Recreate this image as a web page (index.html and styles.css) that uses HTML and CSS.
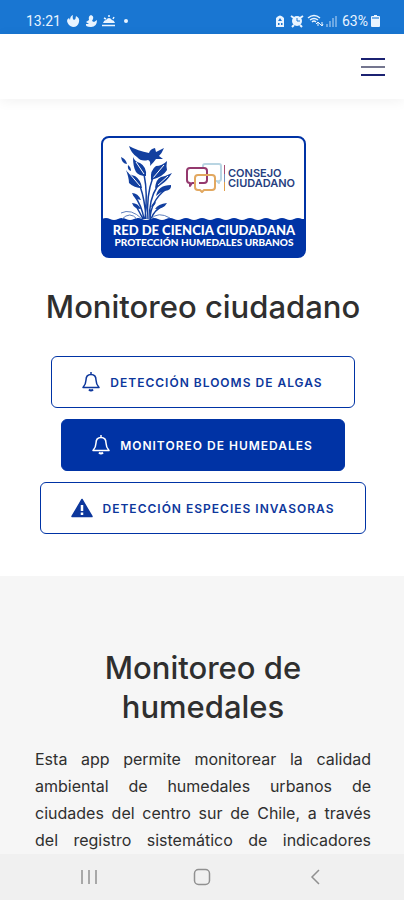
FILE: index.html
```html
<!DOCTYPE html>
<html lang="es">
<head>
<meta charset="utf-8">
<meta name="viewport" content="width=device-width, initial-scale=1">
<title>Monitoreo ciudadano</title>
<link rel="stylesheet" href="styles.css">
</head>
<body>
<div class="status">
  <div class="status-group">
    <span class="clock">13:21</span>
    <svg width="64" height="14" viewBox="0 0 64 14" fill="#e9f4ff" aria-hidden="true">
      <path d="M6 1 Q5 5 7 6 Q9 5 9 2 Q13 4 12 8 Q11 13 6 13 Q1 12 0 7 Q0 5 2 4 L3 6 Q3 2 6 1Z"/>
      <path d="M24 1 Q27 2 26 5 L25 7 L27 8 L30 6 Q30 13 24 13 Q18 13 19 10 L22 10 L19 8 L22 6 Q21 2 24 1Z"/>
      <path d="M36 9 Q37 6 39 6 Q42 2 45 6 Q47 6 48 9Z"/><path d="M35 11.500h13M37 4l2 1M42 1v2M47 3l-1 2" stroke="#e9f4ff" stroke-width="1.500"/>
      <circle cx="59" cy="7" r="2"/>
    </svg>
  </div>
  <div class="status-group status-right">
    <svg width="64" height="14" viewBox="0 0 64 14" fill="#e9f4ff" aria-hidden="true">
      <path d="M1 4 Q5 -1 9 4 V13 H1Z"/><path d="M5 4 L7 7 H3Z M3 9h1.500v2H3zM6 9h1.500v2H6z" fill="#1976d2"/>
      <circle cx="22" cy="7" r="5"/><path d="M16 2l3 2M28 2l-3 2M17 13l2-2M27 13l-2-2" stroke="#e9f4ff" stroke-width="2"/><path d="M22 4v3h3" stroke="#1976d2" fill="none"/>
      <path d="M33 4 Q39 -1 45 4 M35 6 Q39 3 43 6 M37 8 Q39 6 41 8" fill="none" stroke="#e9f4ff" stroke-width="1.500"/><path d="M43 12V8m-2 2l2-2 2 2M47 8v4m-2-2l2 2 1-2" fill="none" stroke="#e9f4ff"/>
      <path d="M51 10h2v3h-2zM54 7h2v6h-2zM57 4h2v9h-2zM60 2h2v11h-2z" opacity=".4"/>
    </svg>
    <span class="clock">63%</span>
    <svg width="9" height="14" viewBox="0 0 9 14" fill="#e9f4ff" aria-hidden="true"><path d="M3 1h3v1h2q1 0 1 1v9q0 1-1 1H1q-1 0-1-1V3q0-1 1-1h2z"/><path d="M1 3h7v2H1z" fill="#74afe8"/></svg>
  </div>
</div>
<header class="header">
  <button class="menu" aria-label="Abrir menú">
    <svg width="24" height="20" viewBox="0 0 24 20" aria-hidden="true"><path d="M0 2h24M0 18h24" stroke="#1b2272" stroke-width="2"/><path d="M0 10h24" stroke="#74768f" stroke-width="2"/></svg>
  </button>
</header>
<main class="main">
  <section class="hero">
    <svg class="logo" width="206" height="122" viewBox="0 0 206 122" role="img" aria-label="Red de Ciencia Ciudadana, Consejo Ciudadano">
      <rect x="2" y="1" width="203" height="120" rx="7" fill="#fff" stroke="#0033a5" stroke-width="2"/>
      <path fill="#0033a5" d="M2 83 q4-2 8 0 t8 0 8 0 8 0 8 0 8 0 8 0 8 0 8 0 8 0 8 0 8 0 8 0 8 0 8 0 8 0 8 0 8 0 8 0 8 0 8 0 8 0 8 0 8 0 8 0 h3 V114 q0 7-7 7 H9 q-7 0-7-7Z"/>
      <g fill="#123f9f">
        <path d="M29 10 Q38 15 49 17 Q50 13 55 12 L56 16 L64 12 Q62 17 59 20 L63 23 L56 23 Q54 26 50 30 Q51 25 48 24 Q41 26 37 21 Q31 17 29 10Z"/>
        <path d="M33 21 Q35 26 40 27 Q47 31 46 40 Q39 40 36 36 Q33 31 33 21Z"/>
        <path d="M67 25 Q66 30 67 34 Q63 41 51 44 Q50 34 56 30 Q62 30 67 25Z"/>
        <path d="M26 34 Q29 39 35 40 Q41 44 42 52 Q34 52 29 47 Q29 42 26 34Z"/>
        <path d="M72 37 Q67 45 62 48 Q59 51 55 52 Q56 43 61 41 Q66 40 72 37Z"/>
        <path d="M71 49 Q72 54 65 55 Q60 56 56 60 Q58 49 71 49Z"/>
        <path d="M21 21 Q26 23 27 28 Q22 28 21 21ZM28 29 Q31 31 31 35 Q27 34 28 29ZM32 57 Q38 57 41 64 Q34 63 32 57ZM32 67 Q38 67 41 73 Q34 73 32 67ZM67 67 Q64 73 55 73 Q58 68 67 67ZM56 66 Q55 70 51 71 Q52 67 56 66Z"/>
      </g>
      <path d="M36 26l8 12M64 29L53 42M29 37l11 13M68 40L57 50" stroke="#fff"/>
      <path d="M45 83 Q48 58 44 38 M46 83 Q45 64 40 50 M48 83 Q46 60 53 41 M50 83 Q48 65 58 49 M44 83 Q42 70 34 59 M50 83 Q51 65 65 54 M43 83 Q40 77 36 70 M51 83 Q54 74 64 69" fill="none" stroke="#123f9f" stroke-width="1.500"/>
      <path d="M22 83 Q30 75 37 83 M21 77 Q31 72 42 83 M51 83 Q58 75 70 82" fill="none" stroke="#5f80bd"/>
      <g fill="none" stroke-width="2" stroke-linejoin="round">
        <path d="M103 33 V30 q0-2 2-2 h14 q2 0 2 2 V43 q0 2-2 2 v2 l-2-2 h-2" stroke="#b9d5e2"/>
        <path d="M94 47 H92 l-2 3 v-3 q-3 0-3-3 V35 q0-3 3-3 h14 q3 0 3 3 V44 q0 3-3 3 h-5" stroke="#94396e"/>
        <path d="M102 39 h10 q3 0 3 3 v9 q0 3-3 3 h-8 l-2 2 -2-2 h-2 q-3 0-3-3 V42 q0-3 3-3 h4" stroke="#e2a860"/>
      </g>
      <path d="M124.500 29v9" stroke="#a84f76"/><path d="M124.500 38v8" stroke="#7793bd"/><path d="M124.500 46v9" stroke="#e2a04c"/>
      <text class="logo-council" x="128" y="41">CONSEJO</text>
      <text class="logo-council" x="128" y="51">CIUDADANO</text>
      <text class="logo-title" x="104" y="99">RED DE CIENCIA CIUDADANA</text>
      <text class="logo-subtitle" x="104" y="110">PROTECCIÓN HUMEDALES URBANOS</text>
    </svg>
    <h1 class="title">Monitoreo ciudadano</h1>
    <div class="actions">
      <button class="action">
        <svg class="icon" width="18" height="20" viewBox="0 0 18 20" fill="none" stroke="currentColor" stroke-width="1.500" aria-hidden="true"><path d="M9 0v2M1 15.500 Q4 12 4 8 Q4 2.500 9 2.500 Q14 2.500 14 8 Q14 12 17 15.500Z" stroke-linejoin="round"/><path d="M7 17.500q2 2 4 0" stroke-width="2"/></svg>
        DETECCIÓN BLOOMS DE ALGAS
      </button>
      <button class="action action-active">
        <svg class="icon" width="18" height="20" viewBox="0 0 18 20" fill="none" stroke="currentColor" stroke-width="1.500" aria-hidden="true"><path d="M9 0v2M1 15.500 Q4 12 4 8 Q4 2.500 9 2.500 Q14 2.500 14 8 Q14 12 17 15.500Z" stroke-linejoin="round"/><path d="M7 17.500q2 2 4 0" stroke-width="2"/></svg>
        MONITOREO DE HUMEDALES
      </button>
      <button class="action">
        <svg class="icon" width="22" height="20" viewBox="0 0 22 20" aria-hidden="true"><path d="M11 1.500 L21 18.500 H1Z" fill="currentColor" stroke="currentColor" stroke-width="1.500" stroke-linejoin="round"/><path d="M11 7v6M11 14.500v2.500" stroke="#fff" stroke-width="2.500"/></svg>
        DETECCIÓN ESPECIES INVASORAS
      </button>
    </div>
  </section>
  <section class="about">
    <h2 class="title">Monitoreo de humedales</h2>
    <p class="text">Esta app permite monitorear la calidad ambiental de humedales urbanos de ciudades del centro sur de Chile, a través del registro sistemático de indicadores</p>
  </section>
</main>
<nav class="system" aria-label="Navegación del sistema">
  <button class="key" aria-label="Recientes"><svg width="16" height="16" viewBox="0 0 16 16" fill="none" stroke="#909090" stroke-width="1.500"><path d="M1 1v14M8 1v14M15 1v14"/></svg></button>
  <button class="key" aria-label="Inicio"><svg width="18" height="18" viewBox="0 0 18 18" fill="none" stroke="#909090" stroke-width="1.500"><rect x="1.500" y="1.500" width="15" height="15" rx="4"/></svg></button>
  <button class="key" aria-label="Atrás"><svg width="16" height="16" viewBox="0 0 16 16" fill="none" stroke="#909090" stroke-width="1.500"><path d="M12 1L5 8l7 7"/></svg></button>
</nav>
</body>
</html>
```
FILE: styles.css
```css
* {
  box-sizing: border-box;
}

body {
  margin: 0;
  min-height: 100vh;
  display: flex;
  flex-direction: column;
  background: #fff;
  color: #2f2f2f;
  font-family: Inter, "Liberation Sans", sans-serif;
}

button {
  margin: 0;
  padding: 0;
  border: 0;
  background: none;
  font: inherit;
}

svg {
  display: block;
  flex: none;
}

.status {
  height: 34px;
  padding: 8px 24px 0 26px;
  display: flex;
  align-items: center;
  justify-content: space-between;
  background: #1976d2;
  color: #e9f4ff;
}

.status-group {
  display: flex;
  align-items: center;
  gap: 6px;
}

.status-right {
  gap: 3px;
}

.clock {
  font: 14px/20px Roboto, sans-serif;
}

.header {
  height: 65px;
  padding: 0 19px;
  display: flex;
  align-items: center;
  justify-content: flex-end;
  box-shadow: 0 2px 12px rgba(0, 0, 0, 0.06);
}

.main {
  flex: 1;
  display: flex;
  flex-direction: column;
}

.hero {
  padding: 37px 14px 42px 16px;
  display: flex;
  flex-direction: column;
  align-items: center;
}

.logo-council {
  font-family: Inter, sans-serif;
  font-size: 11px;
  font-weight: 600;
  fill: #274080;
}

.logo-title,
.logo-subtitle {
  font-family: Lato, sans-serif;
  font-weight: 900;
  fill: #fff;
  text-anchor: middle;
}

.logo-title {
  font-size: 13px;
}

.logo-subtitle {
  font-size: 10px;
}

.title {
  margin: 0;
  font-size: 31px;
  line-height: 39px;
  font-weight: 500;
  text-align: center;
}

.hero .title {
  margin-top: 29px;
}

.actions {
  margin-top: 30px;
  display: flex;
  flex-direction: column;
  align-items: center;
  gap: 11px;
}

.action {
  min-height: 52px;
  padding: 0 31px 0 30px;
  display: flex;
  align-items: center;
  gap: 10px;
  border: 1px solid #0033a5;
  border-radius: 6px;
  background: #fff;
  color: #0d379c;
  font-size: 12px;
  font-weight: 600;
  letter-spacing: 1px;
}

.action-active {
  background: #0033a5;
  color: #fff;
}

.about {
  flex: 1;
  padding: 72px 33px 0 35px;
  background: #f6f6f6;
}

.about .title {
  max-width: 240px;
  margin: 0 auto;
}

.text {
  margin: 20px 0 0;
  font-size: 16px;
  line-height: 27px;
  text-align: justify;
  text-align-last: justify;
}

.system {
  height: 46px;
  padding: 0 32px;
  display: grid;
  grid-template-columns: repeat(3, 1fr);
  background: #f0f0f0;
}

.key {
  display: flex;
  align-items: center;
  justify-content: center;
}
```
